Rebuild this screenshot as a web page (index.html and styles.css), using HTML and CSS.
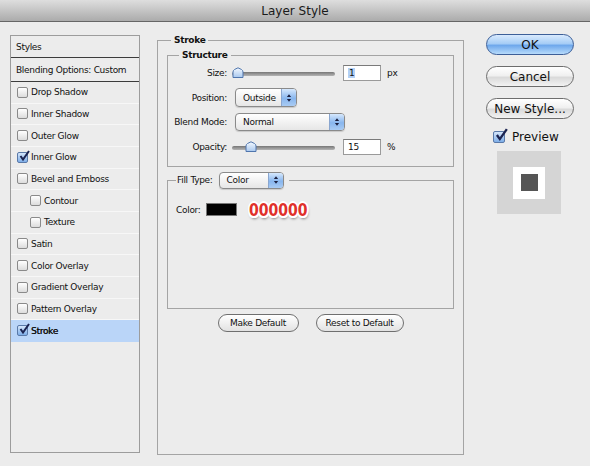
FILE: index.html
```html
<!DOCTYPE html>
<html>
<head>
<meta charset="utf-8">
<link rel="stylesheet" href="styles.css">
</head>
<body>
<div class="window">
  <div class="titlebar">Layer Style</div>
  <div class="main">
    <div class="styles-panel">
      <div class="head-row">Styles</div>
      <div class="head-row blend">Blending Options: Custom</div>
      <div class="row"><span class="cb"></span>Drop Shadow</div>
      <div class="row"><span class="cb"></span>Inner Shadow</div>
      <div class="row"><span class="cb"></span>Outer Glow</div>
      <div class="row"><span class="cb on"><svg viewBox="0 0 12 12"><path d="M2.5 6 L5 9.5 L11 1" fill="none" stroke="#1b2350" stroke-width="2"/></svg></span>Inner Glow</div>
      <div class="row"><span class="cb"></span>Bevel and Emboss</div>
      <div class="row sub"><span class="cb"></span>Contour</div>
      <div class="row sub"><span class="cb"></span>Texture</div>
      <div class="row"><span class="cb"></span>Satin</div>
      <div class="row"><span class="cb"></span>Color Overlay</div>
      <div class="row"><span class="cb"></span>Gradient Overlay</div>
      <div class="row"><span class="cb"></span>Pattern Overlay</div>
      <div class="row selected"><span class="cb on"><svg viewBox="0 0 12 12"><path d="M2.5 6 L5 9.5 L11 1" fill="none" stroke="#1b2350" stroke-width="2"/></svg></span><span class="sel-text">Stroke</span></div>
    </div>

    <fieldset class="group outer">
      <legend class="bold-legend">Stroke</legend>
      <fieldset class="group structure">
        <legend class="bold-legend small">Structure</legend>
        <div class="form">
          <label class="lbl">Size:</label>
          <div class="ctrl">
            <div class="slider"><div class="track"></div><svg class="thumb" style="left:0px" viewBox="0 0 12 11"><path d="M1 10.5 V5 Q1 3.5 2.5 2.5 L6 0.8 L9.5 2.5 Q11 3.5 11 5 V10.5 Z" fill="url(#tg)" stroke="#4f75ad" stroke-width="1"/><defs><linearGradient id="tg" x1="0" y1="0" x2="0" y2="1"><stop offset="0" stop-color="#f4f9ff"/><stop offset="1" stop-color="#a9c8ee"/></linearGradient></defs></svg></div>
            <span class="field"><span class="hl">1</span></span>
            <span class="unit">px</span>
          </div>
          <label class="lbl">Position:</label>
          <div class="ctrl">
            <span class="popup pos"><span class="popup-text">Outside</span><span class="arrows"><svg viewBox="0 0 7 11"><path d="M3.5 1 L6 4.3 H1 Z M3.5 10 L6 6.7 H1 Z" fill="#1b2040"/></svg></span></span>
          </div>
          <label class="lbl">Blend Mode:</label>
          <div class="ctrl">
            <span class="popup blendsel"><span class="popup-text">Normal</span><span class="arrows"><svg viewBox="0 0 7 11"><path d="M3.5 1 L6 4.3 H1 Z M3.5 10 L6 6.7 H1 Z" fill="#1b2040"/></svg></span></span>
          </div>
          <label class="lbl">Opacity:</label>
          <div class="ctrl">
            <div class="slider"><div class="track"></div><svg class="thumb" style="left:13px" viewBox="0 0 12 11"><path d="M1 10.5 V5 Q1 3.5 2.5 2.5 L6 0.8 L9.5 2.5 Q11 3.5 11 5 V10.5 Z" fill="url(#tg2)" stroke="#4f75ad" stroke-width="1"/><defs><linearGradient id="tg2" x1="0" y1="0" x2="0" y2="1"><stop offset="0" stop-color="#f4f9ff"/><stop offset="1" stop-color="#a9c8ee"/></linearGradient></defs></svg></div>
            <span class="field">15</span>
            <span class="unit">%</span>
          </div>
        </div>
      </fieldset>
      <fieldset class="group fill">
        <legend class="fill-legend"><span>Fill Type:</span><span class="popup fillsel"><span class="popup-text">Color</span><span class="arrows"><svg viewBox="0 0 7 11"><path d="M3.5 1 L6 4.3 H1 Z M3.5 10 L6 6.7 H1 Z" fill="#1b2040"/></svg></span></span></legend>
        <div class="color-row">
          <span class="color-lbl">Color:</span>
          <span class="swatch"></span>
          <span class="hex">000000</span>
        </div>
      </fieldset>
      <div class="btn-row">
        <button class="small-btn">Make Default</button>
        <button class="small-btn">Reset to Default</button>
      </div>
    </fieldset>

    <div class="side">
      <button class="btn ok">OK</button>
      <button class="btn">Cancel</button>
      <button class="btn">New Style...</button>
      <div class="preview-row"><span class="cb on big"><svg viewBox="0 0 12 12"><path d="M2.5 6 L5 9.5 L11 1" fill="none" stroke="#1b2350" stroke-width="2"/></svg></span>Preview</div>
      <div class="preview-box"><div class="preview-inner"><div class="preview-square"></div></div></div>
    </div>
  </div>
</div>
</body>
</html>
```
FILE: styles.css
```css
* { box-sizing: border-box; }
html, body { margin: 0; padding: 0; }
body {
  width: 590px;
  height: 466px;
  background: #ececec;
  font-family: "DejaVu Sans", sans-serif;
  font-size: 9px;
  letter-spacing: -0.3px;
  color: #111;
  overflow: hidden;
}
.titlebar {
  height: 22px;
  background: linear-gradient(#dedede, #ababab);
  border-bottom: 1px solid #666;
  text-align: center;
  font-size: 12px;
  letter-spacing: 0;
  line-height: 22px;
  color: #1a1a1a;
}
.main {
  display: flex;
  align-items: flex-start;
  padding: 13px 0 0 10px;
}

/* left styles list */
.styles-panel {
  width: 130px;
  height: 418px;
  border: 1px solid #9c9c9c;
  background: #ececec;
}
.head-row {
  height: 22px;
  padding-left: 5px;
  display: flex;
  align-items: center;
  border-bottom: 1px solid #3c3c3c;
}
.head-row.blend { height: 24px; }
.row {
  height: 21.67px;
  display: flex;
  align-items: center;
  padding-left: 6px;
  border-bottom: 1px solid #f7f7f7;
}
.row.sub { padding-left: 19px; }
.row.selected { background: #bad5f8; border-bottom-color: #bad5f8; }
.sel-text { text-shadow: 0.3px 0 0 #111; }
.cb {
  width: 11px;
  height: 11px;
  border: 1px solid #8a8a8a;
  border-radius: 2px;
  background: linear-gradient(#ffffff, #dcdcdc);
  margin-right: 3px;
  position: relative;
  flex: none;
}
.cb.on {
  background: linear-gradient(#d5e6fb, #7eaee8);
  border-color: #5a79a8;
}
.cb svg {
  position: absolute;
  left: 0;
  top: -3px;
  width: 12px;
  height: 12px;
}

/* fieldsets */
.group {
  margin: 0;
  border: 1px solid #a4a4a4;
  min-width: 0;
}
.bold-legend {
  font-weight: bold;
  line-height: 12px;
  padding: 0 3px;
  color: #111;
}
.outer {
  width: 307px;
  height: 421px;
  margin: -1px 0 0 17px;
  padding: 0 9px;
}
.outer > .bold-legend { margin-left: 4px; }
.structure {
  margin-top: 3px;
  padding: 2px 0 9px 0;
}
.structure > .bold-legend { margin-left: 11px; }
.form {
  display: grid;
  grid-template-columns: 60px auto;
  grid-auto-rows: 20px;
  row-gap: 4.67px;
  column-gap: 4px;
}
.lbl {
  text-align: right;
  padding-right: 1px;
  align-self: center;
}
.ctrl {
  display: flex;
  align-items: center;
}
.slider {
  position: relative;
  width: 103px;
  height: 12px;
}
.track {
  margin-top: 5px;
  height: 4px;
  border-radius: 2px;
  background: linear-gradient(#777, #b5b5b5);
}
.thumb {
  position: absolute;
  top: 0;
  width: 12px;
  height: 11px;
}
.field {
  margin-left: 8px;
  width: 38px;
  height: 16px;
  background: #fff;
  border: 1px solid #9a9a9a;
  border-top-color: #7a7a7a;
  padding: 2px 0 0 4px;
  font-size: 9px;
  line-height: 11px;
}
.hl { background: #b3d1f6; padding: 0 1px; }
.unit { margin-left: 6px; }
.popup {
  display: inline-flex;
  align-items: stretch;
  height: 18px;
  border: 1px solid #8a8a8a;
  border-radius: 4px;
  background: linear-gradient(#ffffff, #e6e6e6);
  overflow: hidden;
  box-shadow: 0 1px 1px rgba(0,0,0,0.15);
}
.popup-text {
  flex: 1;
  padding-left: 7px;
  display: flex;
  align-items: center;
}
.arrows {
  width: 15px;
  border-left: 1px solid #8aa6cf;
  background: linear-gradient(#d6e8fd, #88b6ee 55%, #a9cbf3);
  display: flex;
  align-items: center;
  justify-content: center;
}
.arrows svg { width: 6px; height: 10px; }
.pos { width: 62px; height: 19px; margin-left: 3px; }
.blendsel { width: 110px; margin-left: 3px; }
.fillsel { width: 65px; height: 17px; margin-left: 6px; }

.fill {
  margin-top: 5px;
  height: 137px;
  padding: 0;
}
.fill-legend {
  display: flex;
  align-items: center;
  padding: 0 5px 0 1px;
  margin-left: 8px;
}
.color-row {
  margin-top: 13px;
  height: 16px;
  display: flex;
  align-items: center;
  padding-left: 8px;
}
.color-lbl { width: 30px; }
.swatch {
  width: 31px;
  height: 13px;
  background: #000;
  border: 1px solid #777;
}
.hex {
  display: inline-block;
  margin-left: 12px;
  font-size: 18px;
  line-height: 18px;
  font-weight: bold;
  letter-spacing: 0;
  color: #e0302a;
  transform: scaleX(0.78);
  transform-origin: left center;
  text-shadow: 1px 0 0 #fff, -1px 0 0 #fff, 0 1px 0 #fff, 0 -1px 0 #fff,
    1.5px 1.5px 0 #fff, -1.5px -1.5px 0 #fff, 1.5px -1.5px 0 #fff, -1.5px 1.5px 0 #fff,
    2px 0 0 #fff, -2px 0 0 #fff, 0 2px 0 #fff, 0 -2px 0 #fff,
    1px 3px 3px rgba(0,0,0,0.5);
}
.btn-row {
  margin-top: 5px;
  display: flex;
  justify-content: center;
  gap: 17px;
}
.small-btn {
  height: 18px;
  border: 1px solid #6f6f6f;
  border-radius: 9px;
  background: linear-gradient(#ffffff, #e2e2e2);
  font-family: "DejaVu Sans", sans-serif;
  font-size: 9px;
  letter-spacing: -0.3px;
  color: #111;
  padding: 0;
}
.small-btn:first-child { width: 81px; }
.small-btn:last-child { width: 88px; }

/* right column */
.side {
  margin: -1px 0 0 22px;
  width: 88px;
  display: flex;
  flex-direction: column;
  align-items: flex-start;
}
.btn {
  width: 88px;
  height: 21px;
  margin-bottom: 11px;
  border: 1px solid #6d6d6d;
  border-radius: 11px;
  background: linear-gradient(#ffffff, #f0f0f0 45%, #dadada 55%, #f2f2f2);
  font-family: "DejaVu Sans", sans-serif;
  font-size: 12px;
  letter-spacing: 0;
  color: #111;
  padding: 0;
}
.btn.ok {
  border-color: #3d5f98;
  background: linear-gradient(#d9eafd, #a6cdf6 45%, #6fa8ec 55%, #b7dbfb);
}
.preview-row {
  display: flex;
  align-items: center;
  margin: 1px 0 0 7px;
  font-size: 12px;
  letter-spacing: 0;
  height: 12px;
}
.cb.big { width: 12px; height: 12px; margin-right: 7px; }
.cb.big svg { width: 14px; height: 14px; top: -4px; }
.preview-box {
  margin: 8px 0 0 11px;
  width: 64px;
  height: 63px;
  background: #d5d5d5;
  display: flex;
  align-items: center;
  justify-content: center;
}
.preview-inner {
  width: 32px;
  height: 32px;
  background: #fff;
  display: flex;
  align-items: center;
  justify-content: center;
}
.preview-square {
  width: 17px;
  height: 17px;
  background: #555;
}
```
